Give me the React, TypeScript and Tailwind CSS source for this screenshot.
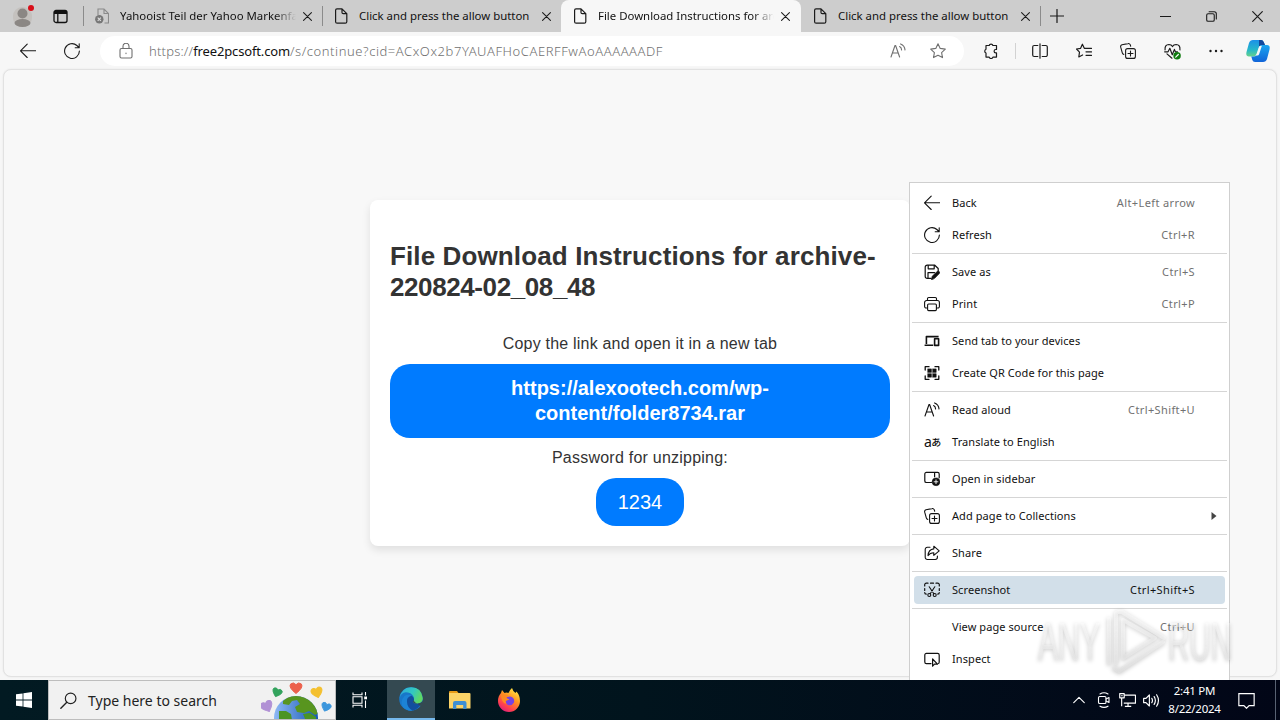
import type { ReactNode } from 'react';

type TabProps = {
  title: string;
  icon: ReactNode;
  active?: boolean;
  faded?: boolean;
};

type MenuEntry = {
  label: string;
  shortcut?: string;
  icon?: ReactNode;
  selected?: boolean;
  submenu?: boolean;
};

/* ---------- ICONS ---------- */

function Icon({ children, className = 'w-4 h-4' }: { children: ReactNode; className?: string }) {
  return (
    <svg
      className={`shrink-0 ${className}`}
      viewBox="0 0 16 16"
      fill="none"
      stroke="currentColor"
      strokeWidth={1.1}
      strokeLinecap="round"
      strokeLinejoin="round"
    >
      {children}
    </svg>
  );
}

const BackIcon = () => (
  <Icon>
    <path d="M15.8 7.8H.6M7.2 1.2L.5 7.8l6.7 6.7" />
  </Icon>
);

const RefreshIcon = () => (
  <Icon>
    <path d="M15.4 8A7.4 7.4 0 1 1 12.9 2.5L15 4.6M15.2.7v4h-4" />
  </Icon>
);

const ReadAloudIcon = () => (
  <Icon>
    <path d="M1 14L5 2.5h.6L9.6 14M2.4 10h5.8M9.6 3.6c1.3.7 2 1.9 2 3.4M10.6.9c2.6 1 4.2 3.1 4.4 6" />
  </Icon>
);

const CollectionsIcon = () => (
  <Icon>
    <rect x="5.6" y="5.6" width="9.8" height="9.8" rx="2" />
    <path d="M10.5 8v5M8 10.5h5M3.8 11.4A2 2 0 0 1 2.3 9.8L.7 4.2A2 2 0 0 1 2 1.8L8 .6a2 2 0 0 1 2.4 1.5l.3 1.2" />
  </Icon>
);

const PageIcon = () => (
  <svg className="w-[14px] h-4 shrink-0" viewBox="0 0 14 16" fill="none" stroke="#1b1b1b" strokeWidth={1.2} strokeLinejoin="round">
    <path d="M1.6 2.2Q1.6.8 3 .8h5l4.8 4.8v8.1q0 1.500-1.500 1.500H3.100q-1.500 0-1.500-1.500zM8 .8v3.600q0 1.200 1.200 1.200h3.600" />
  </svg>
);

const ErrorPageIcon = () => (
  <svg className="w-[14px] h-4 shrink-0" viewBox="0 0 14 16" fill="none" stroke="#8a8a8a" strokeWidth={1.1}>
    <path d="M3 7V1h6l4.500 4.500V15H9.500M9 1v4.500h4.500" />
    <circle cx="4.300" cy="11.200" r="4.200" fill="#777" stroke="none" />
    <path d="M2.700 9.600l3.200 3.200M5.900 9.600l-3.200 3.200" stroke="#ddd" />
  </svg>
);

const CloseIcon = () => (
  <Icon className="w-[9px] h-[9px]">
    <path d="M1 1l14 14M15 1L1 15" strokeWidth={1.900} />
  </Icon>
);

const SaveIcon = () => (
  <Icon>
    <path d="M7 14.400H3.200a2 2 0 0 1-2-2V3.200a2 2 0 0 1 2-2h7.600L14.200 4.500v2M4.200 1.400v3.400h6V1.400M4 14.200V8.600h6.500" strokeWidth={1.200} />
    <path d="M7.600 15.300l.7-3 4.900-4.900q1.300-.8 2.100.3.700 1-.1 1.800l-4.700 4.800z" fill="currentColor" strokeWidth={0.900} />
  </Icon>
);

const PrintIcon = () => (
  <Icon>
    <path d="M3.500 12H2.200A1.600 1.600 0 0 1 .6 10.400V6.500a2 2 0 0 1 2-2h10.800a2 2 0 0 1 2 2v3.900a1.600 1.600 0 0 1-1.600 1.600h-1.300M3.500 4.500V2.700a1.200 1.200 0 0 1 1.200-1.200h6.600a1.200 1.200 0 0 1 1.200 1.200v1.800" />
    <rect x="3.600" y="8" width="8.800" height="6.600" rx="1" />
  </Icon>
);

const DevicesIcon = () => (
  <Icon>
    <path d="M2.400 11V3.600h12.200M.6 12.300h8.600" strokeWidth={1.600} strokeLinecap="butt" />
    <rect x="10.600" y="5.800" width="4" height="6.600" strokeWidth={1.600} />
  </Icon>
);

const QrIcon = () => (
  <Icon>
    <path d="M1.200 5V1.700H5M11 1.700h3.800V5M14.800 11v3.300H11M5 14.300H1.200V11" strokeWidth={1.300} />
    <g fill="currentColor" strokeWidth={0.500}>
      <rect x="3.900" y="3.900" width="3.500" height="3.500" />
      <rect x="8.700" y="3.900" width="3.500" height="3.500" />
      <rect x="3.900" y="8.700" width="3.500" height="3.500" />
      <rect x="8.700" y="8.700" width="3.500" height="3.500" />
    </g>
  </Icon>
);

const TranslateIcon = () => (
  <span className="w-[18px] flex items-center leading-4 tracking-[-0.5px] font-['Noto_Sans','Noto_Sans_CJK_JP',sans-serif]">
    <span className="text-[14px]">a</span>
    <span className="text-[10px] font-medium">あ</span>
  </span>
);

const SidebarIcon = () => (
  <Icon>
    <path d="M7.600 11.500H2.400A1.600 1.600 0 0 1 .8 9.900V3a1.600 1.600 0 0 1 1.600-1.600h11.200A1.600 1.600 0 0 1 15.200 3v3.800M10.600 1.500v4.300" strokeWidth={1.200} />
    <circle cx="12" cy="10.800" r="3.900" fill="currentColor" strokeWidth={0.500} />
    <path d="M12 8.900v3.800M10.100 10.800h3.800" stroke="#fff" strokeWidth={0.900} />
  </Icon>
);

const ShareIcon = () => (
  <Icon>
    <path d="M6 2.300H3.400a2.200 2.200 0 0 0-2.200 2.200v7.800a2.200 2.200 0 0 0 2.200 2.200h7.800a2.200 2.200 0 0 0 2.200-2.200V11" />
    <path d="M9.800 1.200l5.400 4.600-5.400 4.500V7.800Q6 7.800 4 10.600 4.500 4.400 9.800 3.900z" />
  </Icon>
);

const ScreenshotIcon = () => (
  <Icon>
    <path d="M.7 4V2.800A1.600 1.600 0 0 1 2.300 1.200H4M6.500 1.200h3M12 1.200h1.700a1.600 1.600 0 0 1 1.600 1.600V4M15.300 6.500v2M15.300 10.500q0 1.600-1.600 1.600M.7 6.500v2M.7 10.500q0 1.600 1.600 1.600" strokeWidth={1.200} />
    <path d="M5.200 4.800l4.600 7M10.800 4.800l-4.600 7" />
    <circle cx="5.300" cy="13" r="1.500" />
    <circle cx="10.700" cy="13" r="1.500" />
  </Icon>
);

const InspectIcon = () => (
  <Icon>
    <path d="M7 12.600H2.400A1.600 1.600 0 0 1 .8 11V4a1.600 1.600 0 0 1 1.600-1.600h11.200A1.600 1.600 0 0 1 15.200 4v7q0 1.300-1 1.500" strokeWidth={1.200} />
    <path d="M8.600 8v7.200l1.900-2h3z" strokeWidth={1.200} />
  </Icon>
);

/* ---------- BROWSER ---------- */

function Tab({ title, icon, active = false, faded = false }: TabProps) {
  return (
    <div className={`h-8 flex items-center pl-3 ${active ? 'w-[240px] pr-[11px] bg-[#f7f7f7] rounded-t-lg' : 'w-[239px] pr-[10px]'}`}>
      {icon}
      <span
        className={`ml-[11px] w-[176px] overflow-hidden whitespace-nowrap text-[11.4px] leading-4 text-[#111] ${
          faded ? '[mask-image:linear-gradient(to_right,black_155px,transparent_176px)]' : ''
        }`}
      >
        {title}
      </span>
      <span className="ml-auto flex">
        <CloseIcon />
      </span>
    </div>
  );
}

const Divider = () => <div className="w-px h-5 bg-[#8b8b8b] shrink-0 -mr-px" />;

function TabBar() {
  return (
    <header className="h-8 bg-[#cdcdcd] flex items-center text-[#1b1b1b]">
      <div className="w-[83px] flex items-center pl-[13px]">
        <svg className="w-[22px] h-6" viewBox="0 0 22 24">
          <rect x="0" y="3" width="19" height="20" rx="9" fill="#c4c1be" />
          <circle cx="9.500" cy="9.500" r="5" fill="#8b8784" />
          <ellipse cx="9.500" cy="19" rx="8" ry="4" fill="#8b8784" />
          <circle cx="18" cy="4" r="3" fill="#d80f19" />
        </svg>
        <svg className="w-[15px] h-[15px] ml-[18px]" viewBox="0 0 15 15" fill="none" stroke="#111" strokeWidth={1.300}>
          <rect x="1" y="1.500" width="13" height="12" rx="2" />
          <path d="M1 3.500h13" strokeWidth={3} />
          <path d="M4.800 4v9" />
        </svg>
      </div>
      <Divider />
      <Tab title="Yahooist Teil der Yahoo Markenfamilie" icon={<ErrorPageIcon />} faded />
      <Divider />
      <Tab title="Click and press the allow button" icon={<PageIcon />} />
      <Tab title="File Download Instructions for archive" icon={<PageIcon />} active faded />
      <Tab title="Click and press the allow button" icon={<PageIcon />} />
      <Divider />
      <Icon className="w-[14px] h-[14px] ml-[10px]">
        <path d="M8 .5v15M.5 8h15" strokeWidth={1.400} />
      </Icon>
      <div className="ml-auto flex items-center gap-[35px] pr-[17px]">
        <Icon className="w-[11px] h-[11px]">
          <path d="M.5 8h15" strokeWidth={1.600} />
        </Icon>
        <Icon className="w-[11px] h-[11px]">
          <rect x="1" y="4" width="11" height="11" rx="2" strokeWidth={1.600} />
          <path d="M4.500 1H12q3 0 3 3v7.500" strokeWidth={1.600} />
        </Icon>
        <Icon className="w-[11px] h-[11px]">
          <path d="M1 1l14 14M15 1L1 15" strokeWidth={1.700} />
        </Icon>
      </div>
    </header>
  );
}

const CopilotIcon = () => (
  <svg className="w-6 h-6 shrink-0" viewBox="0 0 24 24">
    <defs>
      <linearGradient id="cpA" x1="0" y1="0" x2="0" y2="1">
        <stop offset="0" stopColor="#1b90e8" />
        <stop offset="0.600" stopColor="#26b8c9" />
        <stop offset="1" stopColor="#67d28b" />
      </linearGradient>
      <linearGradient id="cpB" x1="0" y1="0" x2="0" y2="1">
        <stop offset="0" stopColor="#1aa5f0" />
        <stop offset="1" stopColor="#1164d8" />
      </linearGradient>
    </defs>
    <path d="M7 1h8q2 0 2.700 2L19 6h-3q-2 0-3 3l-2 6q-.8 2.500-3 2.500H3Q-.5 17.500.5 13L3 4Q4 1 7 1z" fill="url(#cpA)" />
    <path d="M13 1h2q2 0 2.700 2L19 6h-3q-2 0-3 2z" fill="#14489c" />
    <path d="M17 23H9q-2 0-2.700-2l-1-3.500H8q2.200 0 3-2.500l2-6q1-3 3-3h5q3.500 0 2.500 4.500L21 20q-1 3-4 3z" fill="url(#cpB)" />
    <path d="M13.500 7h2.300l-2.600 8q-.5 1.500-2 1.500H9q1.300-.5 1.700-2L12.500 9z" fill="#f7f7f7" />
  </svg>
);

function Toolbar() {
  return (
    <div className="h-[37px] pt-px bg-[#f7f7f7] flex items-center text-[#1b1b1b]">
      <div className="w-[100px] flex items-center gap-7 pl-5">
        <BackIcon />
        <RefreshIcon />
      </div>
      <div className="w-[864px] h-[30px] rounded-full bg-white flex items-center pl-[18px] pr-[18px] text-[#707070]">
        <Icon>
          <rect x="2" y="5.500" width="12" height="9.500" rx="1.500" />
          <path d="M5 5.500V3.300a3 3 0 0 1 6 0v2.200M8 10v.6" />
        </Icon>
        <span className="ml-[15px] flex text-[13px] leading-4 whitespace-nowrap font-light">
          <span className="tracking-[0.2px]">https://</span>
          <span className="text-[#111] font-normal tracking-[-0.15px]">free2pcsoft.com</span>
          <span className="tracking-[0.57px]">/s/continue?cid=ACxOx2b7YAUAFHoCAERFFwAoAAAAAADF</span>
        </span>
        <div className="ml-auto flex items-center gap-6">
          <ReadAloudIcon />
          <Icon>
            <path d="M8 .8l2.200 4.600 5.100.7-3.700 3.500.9 5L8 12.200l-4.500 2.400.9-5L.7 6.100l5.100-.7z" />
          </Icon>
        </div>
      </div>
      <div className="flex items-center pl-[19px]">
        <Icon>
          <path d="M3 2.500h3.200a1.900 1.900 0 0 1 3.700 0H13.500v4h-.7a1.700 1.700 0 0 0 0 3.400h.7v4.200H9.900a1.900 1.900 0 0 1-3.700 0H3V10a2 2 0 0 1 0-3.700z" strokeWidth={1.200} />
        </Icon>
        <div className="w-px h-4 bg-[#d2d2d2] ml-4 mr-4" />
        <Icon>
          <path d="M5.800 2.500H2.200A1.500 1.500 0 0 0 .7 4v8a1.500 1.500 0 0 0 1.500 1.500h3.600M10.200 2.500h3.600A1.500 1.500 0 0 1 15.300 4v8a1.500 1.500 0 0 1-1.500 1.500h-3.600M8 .8v14.400" strokeWidth={1.200} />
        </Icon>
        <Icon className="w-4 h-4 ml-7">
          <path d="M9.600 5.300H8.300L6.400 1.200 4.500 5.400l-4 .6 3 3.100-.7 4.900 3.800-2M10 5.300h5.500M10 8.800h5.500M10 12.300h5.500" strokeWidth={1.200} />
        </Icon>
        <span className="ml-7">
          <CollectionsIcon />
        </span>
        <Icon className="w-[17px] h-[17px] ml-7">
          <path d="M1 6.500Q.6 1.500 4.600 1.400 7 1.400 8 3.400 9 1.400 11.400 1.400 15.400 1.500 15 6.500M.6 8.300h3.200L5.500 5l2.300 6 2-5 .9 2.300h2M2.800 10.200L7.500 14.300" />
          <circle cx="12.300" cy="12" r="3.500" fill="#107c10" stroke="none" />
          <path d="M11 13.300l2.500-2.500" stroke="#fff" />
        </Icon>
        <Icon className="w-4 h-4 ml-[27px]">
          <g fill="currentColor" stroke="none">
            <circle cx="2.500" cy="8" r="1.200" />
            <circle cx="8" cy="8" r="1.200" />
            <circle cx="13.500" cy="8" r="1.200" />
          </g>
        </Icon>
        <span className="ml-[22px]">
          <CopilotIcon />
        </span>
      </div>
    </div>
  );
}

function DownloadCard() {
  return (
    <section className="w-[540px] h-[346px] rounded-lg bg-white shadow-[0_4px_8px_rgba(0,0,0,0.1)] px-5 flex flex-col items-center font-['Liberation_Sans',Arial,sans-serif] text-[#333]">
      <h1 className="w-full mt-[41px] text-[26px] leading-[31px] font-bold">
        <span className="tracking-[0.12px]">File Download Instructions for archive-</span>
        <br />
        <span className="tracking-[-0.4px]">220824-02_08_48</span>
      </h1>
      <p className="mt-[31px] text-[16px] leading-5 tracking-[0.2px]">Copy the link and open it in a new tab</p>
      <a className="w-full h-[74px] mt-[10px] rounded-[20px] bg-[#007bff] text-white text-center text-[20px] leading-[25px] font-bold pt-[12px]">
        https://alexootech.com/wp-
        <br />
        content/folder8734.rar
      </a>
      <p className="mt-[10px] text-[16px] leading-5 tracking-[0.23px]">Password for unzipping:</p>
      <button className="w-[88px] h-12 mt-[10px] rounded-[20px] bg-[#007bff] text-white text-[20px] leading-6">1234</button>
    </section>
  );
}

/* ---------- CONTEXT MENU ---------- */

const menuGroups: MenuEntry[][] = [
  [
    { label: 'Back', shortcut: 'Alt+Left arrow', icon: <BackIcon /> },
    { label: 'Refresh', shortcut: 'Ctrl+R', icon: <RefreshIcon /> },
  ],
  [
    { label: 'Save as', shortcut: 'Ctrl+S', icon: <SaveIcon /> },
    { label: 'Print', shortcut: 'Ctrl+P', icon: <PrintIcon /> },
  ],
  [
    { label: 'Send tab to your devices', icon: <DevicesIcon /> },
    { label: 'Create QR Code for this page', icon: <QrIcon /> },
  ],
  [
    { label: 'Read aloud', shortcut: 'Ctrl+Shift+U', icon: <ReadAloudIcon /> },
    { label: 'Translate to English', icon: <TranslateIcon /> },
  ],
  [{ label: 'Open in sidebar', icon: <SidebarIcon /> }],
  [{ label: 'Add page to Collections', icon: <CollectionsIcon />, submenu: true }],
  [{ label: 'Share', icon: <ShareIcon /> }],
  [{ label: 'Screenshot', shortcut: 'Ctrl+Shift+S', icon: <ScreenshotIcon />, selected: true }],
  [
    { label: 'View page source', shortcut: 'Ctrl+U' },
    { label: 'Inspect', icon: <InspectIcon /> },
  ],
];

function ContextMenu() {
  return (
    <nav className="absolute left-[909px] top-[182px] w-[321px] h-[498px] bg-white border border-b-0 border-[#cfcfcf] pt-1 text-[11px] leading-4 text-[#111]">
      {menuGroups.map((group, i) => (
        <div key={group[0].label}>
          {i > 0 && (
            <div className="p-0.5">
              <div className="h-px bg-[#d5d5d5]" />
            </div>
          )}
          {group.map((item) => (
            <div key={item.label} className="px-1 py-0.5">
              <div className={`h-7 rounded flex items-center pl-[10px] ${item.selected ? 'bg-[#d2dfe9]' : ''}`}>
                <span className="w-4 shrink-0">{item.icon}</span>
                <span className="ml-3 tracking-[0.08px]">{item.label}</span>
                {item.shortcut && (
                  <span className={`ml-auto mr-[30px] tracking-[0.38px] ${item.selected ? 'text-[#111]' : 'text-[#717171]'}`}>
                    {item.shortcut}
                  </span>
                )}
                {item.submenu && (
                  <svg className="ml-auto mr-2 w-[6px] h-2" viewBox="0 0 6 8">
                    <path d="M.5 0L5.500 4 .5 8z" fill="#444" />
                  </svg>
                )}
              </div>
            </div>
          ))}
        </div>
      ))}
    </nav>
  );
}

function Watermark() {
  return (
    <svg
      className="absolute left-[1030px] top-[604px] w-[250px] h-[76px] drop-shadow-[0_1px_2px_rgba(0,0,0,0.4)]"
      viewBox="0 0 250 76"
      fontFamily="Liberation Sans, Arial, sans-serif"
      fontSize="53"
    >
      <defs>
        <linearGradient id="wm" gradientUnits="userSpaceOnUse" x1="0" y1="8" x2="0" y2="66">
          <stop offset="0.200" stopColor="#fff" stopOpacity="0.450" />
          <stop offset="1" stopColor="#e4e4e4" stopOpacity="0.600" />
        </linearGradient>
      </defs>
      <g fill="url(#wm)">
        <text x="8" y="56" textLength="62" lengthAdjust="spacingAndGlyphs">ANY</text>
        <text x="138" y="56" textLength="64" lengthAdjust="spacingAndGlyphs">RUN</text>
      </g>
      <g fill="none" stroke="url(#wm)" strokeWidth="4" strokeLinejoin="round" strokeLinecap="round">
        <path d="M93 16v38l32-20z" />
        <path d="M79 15v44M86 9v50M88 8l4 0 42 26M84 64l5 3 44-29" />
      </g>
    </svg>
  );
}

/* ---------- TASKBAR ---------- */

const HeartPath = ({ fill }: { fill: string }) => (
  <path d="M0 5.500Q-7.800-.5-5.400-4-2.500-6.500 0-3.300 2.500-6.500 5.400-4 7.800-.5 0 5.500z" fill={fill} stroke={fill} strokeLinejoin="round" />
);

const EarthArt = () => (
  <svg className="w-[71px] h-[38px]" viewBox="0 0 71 38">
    <defs>
      <linearGradient id="sea" x1="0" x2="1">
        <stop offset="0" stopColor="#8eb8f4" />
        <stop offset="1" stopColor="#1758b5" />
      </linearGradient>
      <clipPath id="globe">
        <circle cx="35" cy="37" r="22" />
      </clipPath>
    </defs>
    <circle cx="35" cy="37" r="22" fill="url(#sea)" />
    <g clipPath="url(#globe)">
      <path d="M22 20l8-6h12l10 6 6 12-4 2-6-4-5 2-7-1-2-5 5-3-3-4-5 1-3 4-6-1z" fill="#58951f" />
      <path d="M42 33l7-1 6 4v4H45zM18 30l7 0 5 3 1 6H18z" fill="#4b9424" />
    </g>
    <g transform="translate(35 7)">
      <HeartPath fill="#ec604c" />
    </g>
    <g transform="translate(16 11.500) rotate(20) scale(.8)">
      <HeartPath fill="#33a35d" />
    </g>
    <g transform="translate(56 11.500) rotate(-15) scale(.95)">
      <HeartPath fill="#f4c02f" />
    </g>
    <g transform="translate(6 25.500) rotate(-25)">
      <HeartPath fill="#b191d5" />
    </g>
    <g transform="translate(65 26) rotate(20) scale(.8)">
      <HeartPath fill="#3c96dc" />
    </g>
  </svg>
);

const EdgeLogo = () => (
  <svg className="w-6 h-6" viewBox="0 0 24 24">
    <defs>
      <linearGradient id="edgeTop" x1="0" y1="0" x2="1" y2="0.400">
        <stop offset="0" stopColor="#2fa9df" />
        <stop offset="0.600" stopColor="#33c8c0" />
        <stop offset="1" stopColor="#5fd865" />
      </linearGradient>
    </defs>
    <circle cx="12" cy="12" r="11.800" fill="#1877c9" />
    <path d="M.4 12Q2 4 9 5.500q5.500 1 6 6.500 0 1.800-1.300 3 .8 2 4.800 1.800 5.300-.8 5.300-5.500Q22.500 0 12 .2 2 .5.4 12z" fill="url(#edgeTop)" />
    <path d="M8 15q-.6-5 4.500-6.300Q9 6.500 5.500 9 .5 14 4 20q4 4.500 9.500 3.600Q8.500 21 8 15z" fill="#1c83d6" />
    <path d="M8 15q-.6-5 4.500-6.300 2.500 1.300 2.500 3.500 0 1.500-1.300 2.800.8 2 4.800 1.800 2 0 4-1.300Q19 23 13.500 23.600 8.500 21 8 15z" fill="#124f9e" />
    <path d="M13.700 15Q14.600 14 14.600 12.500q.4 3 4 4.300-4 .2-4.900-1.800zM18.500 16.800q3.500-.3 5.500-3l-1.500 5q-2 .5-4-2z" fill="#344951" />
  </svg>
);

const FolderLogo = () => (
  <svg className="w-[22px] h-[18px]" viewBox="0 0 22 18">
    <path d="M0 1q0-1 1-1h7l1.500 2H0z" fill="#e79b17" />
    <path d="M0 2h20.500q1 0 1 1v14.500H0z" fill="#fbd367" />
    <path d="M4 18v-6q0-2 2-2h9.500q2 0 2 2v6h-3.300v-4H7.300v4z" fill="#3e8fd3" />
  </svg>
);

const FirefoxLogo = () => (
  <svg className="w-[22px] h-6" viewBox="0 0 22 24">
    <defs>
      <linearGradient id="fox" x1="0.800" y1="0" x2="0.200" y2="1">
        <stop offset="0" stopColor="#fff04a" />
        <stop offset="0.400" stopColor="#ff9420" />
        <stop offset="0.750" stopColor="#ff3f4f" />
        <stop offset="1" stopColor="#d81b82" />
      </linearGradient>
    </defs>
    <path d="M3 5L4 2l2.500 3q2-1 4 0Q11.500 2 14 0q1 3.500 3.500 5L18.500 3.500Q22 7.500 22 13A11 11 0 0 1 0 13Q0 8 3 5z" fill="url(#fox)" />
    <path d="M7 9.500l5-1q5 1 4 6-2 3.500-6 2.500Q6.500 15 8 12.500l2-1z" fill="#7542e5" />
    <path d="M3 6l3 1.500 4-.5-1.500 3 3 1.500-4 1.500 1 3Q3 15 3 6z" fill="#ff8a22" />
  </svg>
);

function Taskbar() {
  return (
    <footer className="h-10 flex items-stretch bg-linear-to-r from-[#021a22] via-[#01141d] to-[#020617] text-white">
      <div className="w-12 flex items-center justify-center">
        <svg className="w-4 h-4" viewBox="0 0 16 16" fill="#fff">
          <path d="M0 2.300L6.600 1.400v6.200H0zM7.400 1.300L16 0v7.600H7.400zM0 8.400h6.600v6.200L0 13.700zM7.400 8.400H16V16l-8.600-1.200z" />
        </svg>
      </div>
      <div className="w-72 bg-[#f1f1f1] border border-[#bdbdbd] flex items-center pl-[11px] pr-[3px] text-[#222]">
        <Icon className="w-[17px] h-[17px]">
          <circle cx="10" cy="6" r="5" />
          <path d="M6.400 9.600L.8 15.200" strokeWidth={1.300} />
        </Icon>
        <span className="ml-[11px] pt-0.5 text-[14px] leading-5">Type here to search</span>
        <span className="ml-auto flex self-end">
          <EarthArt />
        </span>
      </div>
      <div className="w-[51px] flex items-center justify-center pr-[3px]">
        <svg className="w-4 h-4" viewBox="0 0 16 16" fill="none" stroke="#fff" strokeWidth={1.100}>
          <path d="M1 .5v2.300h9V.5M1 15.500v-2.300h9v2.300M1 4.800h9v6.400H1zM13.500 0v3.500M13.500 8.500V16" />
          <path d="M12.200 4.500H15v2.800h-2.800z" fill="#fff" stroke="none" />
        </svg>
      </div>
      <div className="w-12 bg-[#344951] border-b-2 border-[#76b9ed] flex items-center justify-center">
        <EdgeLogo />
      </div>
      <div className="w-[50px] flex items-center justify-center">
        <FolderLogo />
      </div>
      <div className="w-12 flex items-center justify-center">
        <FirefoxLogo />
      </div>
      <div className="ml-auto flex items-center">
        <Icon className="w-3 h-3">
          <path d="M1 11.500l7-7 7 7" strokeWidth={1.500} />
        </Icon>
        <Icon className="w-4 h-4 ml-[11px]">
          <rect x="2.500" y="4.500" width="7.500" height="7" rx="1.300" />
          <path d="M10 7l3-1.500v5L10 9M4 2Q8-.5 12 2M4 14.200q4 2.400 8 0" />
        </Icon>
        <Icon className="w-[17px] h-[17px] ml-[7px]">
          <path d="M5.500 3h10v7.500H4.500M8.500 10.500v3M5.500 13.600h6M2.500 6v7.500M.7 1.500h4.200v4H.7zM2 3.500h1.500" strokeLinecap="butt" />
        </Icon>
        <Icon className="w-[17px] h-[17px] ml-[7px]">
          <path d="M.6 6h2.200L6 2.800v10.400L2.800 10H.6zM8.300 6q1.200 2 0 4M10.500 4.300q2.300 3.700 0 7.400M12.800 2.600q3.500 5.400 0 10.800" />
        </Icon>
        <div className="w-[55px] ml-[7px] text-center text-[11.5px] leading-[18px] tracking-[-0.25px] whitespace-nowrap">
          <div>2:41 PM</div>
          <div>8/22/2024</div>
        </div>
        <Icon className="w-[17px] h-[17px] ml-4">
          <path d="M.8 1.500h14.400v11.300h-4.700L8 15.300l-2.500-2.500H.8z" strokeLinejoin="miter" />
        </Icon>
        <div className="w-px h-10 ml-[20px] mr-1 bg-[#596273]" />
      </div>
    </footer>
  );
}

export default function App() {
  return (
    <div className="relative w-[1280px] h-[720px] overflow-hidden flex flex-col bg-[#f7f7f7] font-['Noto_Sans',sans-serif]">
      <TabBar />
      <Toolbar />
      <main className="flex-1 mx-[3px] mb-[3px] rounded-lg border border-[#e2e2e2] bg-[#f8f8f8] shadow-[0_0_2px_rgba(0,0,0,0.08)] flex flex-col items-center pt-[130px]">
        <DownloadCard />
      </main>
      <Taskbar />
      <ContextMenu />
      <Watermark />
    </div>
  );
}
